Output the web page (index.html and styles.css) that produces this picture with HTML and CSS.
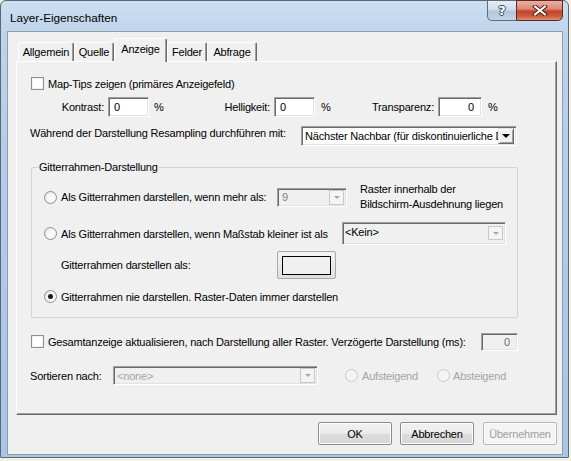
FILE: index.html
```html
<!DOCTYPE html>
<html lang="de">
<head>
<meta charset="utf-8">
<title>Layer-Eigenschaften</title>
<link rel="stylesheet" href="styles.css">
</head>
<body>
<div class="window">
  <div class="titlebar">
    <span class="title">Layer-Eigenschaften</span>
    <div class="caption-btns">
      <div class="cbtn help"><span class="q">?</span></div>
      <div class="cbtn close">
        <svg width="16" height="11" viewBox="0 0 16 11">
          <path d="M3 1.5 L13 9.5 M13 1.5 L3 9.5" stroke="#4a1c14" stroke-width="4" stroke-linecap="square" fill="none"/>
          <path d="M3 1.5 L13 9.5 M13 1.5 L3 9.5" stroke="#ffffff" stroke-width="2" stroke-linecap="square" fill="none"/>
        </svg>
      </div>
    </div>
  </div>
  <div class="client">
    <div class="tabs">
      <div class="tab t1">Allgemein</div>
      <div class="tab t2">Quelle</div>
      <div class="tab active t3">Anzeige</div>
      <div class="tab t4">Felder</div>
      <div class="tab t5">Abfrage</div>
    </div>
    <div class="panel">
      <div class="row r-map">
        <span class="chk"></span>
        <span class="lbl ml4">Map-Tips zeigen (primäres Anzeigefeld)</span>
      </div>
      <div class="row r-kon">
        <span class="lbl lk">Kontrast:</span>
        <span class="edit w41">0</span>
        <span class="pct p1">%</span>
        <span class="lbl lh">Helligkeit:</span>
        <span class="edit w41">0</span>
        <span class="pct p2">%</span>
        <span class="lbl lt">Transparenz:</span>
        <span class="edit w44 right">0</span>
        <span class="pct p3">%</span>
      </div>
      <div class="row r-res">
        <span class="lbl lres">Während der Darstellung Resampling durchführen mit:</span>
        <div class="combo white wres">
          <span class="ctext">Nächster Nachbar (für diskontinuierliche Daten)</span>
          <span class="arrow classic"><span class="tri"></span></span>
        </div>
      </div>

      <div class="group">
        <div class="legend"><span>Gitterrahmen-Darstellung</span></div>
        <div class="row g-r1">
          <span class="radio"></span>
          <span class="lbl ml4 lg1">Als Gitterrahmen darstellen, wenn mehr als:</span>
          <div class="combo dis w70">
            <span class="ctext grey">9</span>
            <span class="arrow flat"><span class="tri light"></span></span>
          </div>
          <div class="note">Raster innerhalb der<br>Bildschirm-Ausdehnung liegen</div>
        </div>
        <div class="row g-r2">
          <span class="radio"></span>
          <span class="lbl ml4 lg2">Als Gitterrahmen darstellen, wenn Maßstab kleiner ist als</span>
          <div class="combo dis w164 tall">
            <span class="ctext top">&lt;Kein&gt;</span>
            <span class="arrow flat"><span class="tri light"></span></span>
          </div>
        </div>
        <div class="row g-r3">
          <span class="lbl lg3">Gitterrahmen darstellen als:</span>
          <div class="colorbtn"><span class="swatch"></span></div>
        </div>
        <div class="row g-r4">
          <span class="radio on"></span>
          <span class="lbl ml4">Gitterrahmen nie darstellen. Raster-Daten immer darstellen</span>
        </div>
      </div>

      <div class="row r-ges">
        <span class="chk"></span>
        <span class="lbl ml4 lges">Gesamtanzeige aktualisieren, nach Darstellung aller Raster. Verzögerte Darstellung (ms):</span>
        <span class="edit dis w37 right">0</span>
      </div>
      <div class="row r-sort">
        <span class="lbl lsort">Sortieren nach:</span>
        <div class="combo dis w205">
          <span class="ctext grey2">&lt;none&gt;</span>
          <span class="arrow flat"><span class="tri light"></span></span>
        </div>
        <span class="radio dis ml27"></span>
        <span class="lbl grey2 ml4 lauf">Aufsteigend</span>
        <span class="radio dis"></span>
        <span class="lbl grey2 ml3">Absteigend</span>
      </div>
    </div>
    <div class="buttons">
      <div class="btn def">OK</div>
      <div class="btn b2">Abbrechen</div>
      <div class="btn b3 disabled">Übernehmen</div>
    </div>
  </div>
</div>
</body>
</html>
```
FILE: styles.css
```css
* { box-sizing: border-box; }
html, body { margin: 0; padding: 0; }
body {
  width: 571px;
  height: 461px;
  background: #f4f1df;
  font-family: "Liberation Sans", Arial, sans-serif;
  font-size: 11px;
  letter-spacing: -0.2px;
  color: #000;
  overflow: hidden;
}
.window {
  width: 569px;
  height: 458px;
  border: 1px solid #56687a;
  border-radius: 6px 6px 1px 1px;
  background: linear-gradient(180deg, #cddff1 0%, #bcd3eb 8%, #b3cce7 40%, #a9c5e4 100%);
  padding: 0 5px 2px 6px;
  display: flex;
  flex-direction: column;
}
.titlebar {
  height: 30px;
  display: flex;
  align-items: flex-start;
  flex-shrink: 0;
}
.title {
  font-size: 11.7px;
  letter-spacing: 0;
  margin: 10px 0 0 3px;
  flex: 1;
  color: #000;
}
.caption-btns {
  display: flex;
  margin-top: -1px;
}
.cbtn {
  height: 21px;
  border: 1px solid #5b6b7c;
  display: flex;
  align-items: center;
  justify-content: center;
}
.help {
  width: 29px;
  border-radius: 0 0 0 5px;
  border-right: none;
  background: linear-gradient(180deg, #e6eef7 0%, #cfdceb 45%, #b4c6da 55%, #c3d4e6 100%);
}
.help .q {
  color: #fff;
  font-family: "DejaVu Sans", sans-serif;
  font-weight: bold;
  font-size: 13px;
  text-shadow: 1px 0 #35485c, -1px 0 #35485c, 0 1px #35485c, 0 -1px #35485c;
}
.close {
  width: 47px;
  border-radius: 0 0 5px 0;
  border-color: #5c2a22;
  background: linear-gradient(180deg, #eab0a3 0%, #dd8a76 40%, #c7422c 55%, #cf5a40 80%, #e0906f 100%);
}
.client {
  width: 556px;
  height: 424px;
  border: 1px solid #8e9cab;
  background: #f0f0f0;
  display: flex;
  flex-direction: column;
}
.tabs {
  display: flex;
  align-items: flex-end;
  height: 23px;
  margin: 6px 0 0 10px;
}
.tab {
  height: 19px;
  border-top: 1px solid #fff;
  border-left: 1px solid #fff;
  border-right: 1px solid #696969;
  border-radius: 2px 2px 0 0;
  box-shadow: inset -1px 0 #a0a0a0;
  text-align: center;
  padding-top: 3px;
  background: #f0f0f0;
}
.tab.active {
  height: 24px;
  margin-bottom: -1px;
  position: relative;
  z-index: 1;
  padding-top: 4px;
}
.t1 { width: 56px; }
.t2 { width: 40px; }
.t3 { width: 53px; }
.t4 { width: 40px; }
.t5 { width: 50px; }
.panel {
  margin-left: 8px;
  width: 541px;
  height: 354px;
  border-top: 1px solid #fff;
  border-left: 1px solid #fff;
  border-right: 1px solid #696969;
  border-bottom: 1px solid #696969;
  box-shadow: inset -1px -1px #a0a0a0;
  flex-shrink: 0;
}
.row {
  display: flex;
  align-items: center;
}
.lbl { white-space: nowrap; }
.ml4 { margin-left: 4px; }
.ml3 { margin-left: 3px; }
.ml27 { margin-left: 27px; }

.chk {
  width: 13px;
  height: 13px;
  border: 1px solid #8e8f8f;
  background: #fff;
  box-shadow: inset 0 0 0 1px #f1f1f1;
  flex-shrink: 0;
}
.radio {
  width: 13px;
  height: 13px;
  border-radius: 50%;
  border: 1px solid #8e8f8f;
  background: radial-gradient(circle at 60% 60%, #fff 0%, #f4f4f4 50%, #d9d9d9 100%);
  flex-shrink: 0;
  display: flex;
  align-items: center;
  justify-content: center;
}
.radio.on::after {
  content: "";
  width: 5px;
  height: 5px;
  border-radius: 50%;
  background: #1b1b1b;
}
.radio.dis {
  border-color: #c8c8c8;
  background: #f4f4f4;
}

.edit {
  height: 20px;
  border: 1px solid;
  border-color: #a0a0a0 #fff #fff #a0a0a0;
  box-shadow: inset 1px 1px #696969, inset -1px -1px #e3e3e3;
  background: #fff;
  padding: 0 4px 0 5px;
  display: flex;
  align-items: center;
  flex-shrink: 0;
}
.edit.right { justify-content: flex-end; padding-right: 7px; }
.edit.dis { background: #f0f0f0; color: #6d6d6d; height: 18px; }
.w41 { width: 41px; }
.w44 { width: 44px; }
.w37 { width: 37px; }

.r-map { margin: 15px 0 0 14px; height: 13px; }
.r-kon { margin-top: 7px; height: 20px; }
.lk { width: 87px; text-align: right; margin-right: 4px; }
.pct { padding-left: 5px; }
.p1 { width: 73px; }
.lh { width: 48px; text-align: right; margin-right: 4px; }
.p2 { width: 54px; padding-left: 6px; }
.lt { width: 65px; text-align: right; margin-right: 4px; }
.p3 { padding-left: 6px; }

.r-res { margin-top: 9px; height: 20px; padding-left: 13px; align-items: flex-start; }
.lres { width: 271px; padding-top: 1px; }

.combo {
  position: relative;
  height: 20px;
  border: 1px solid;
  border-color: #a0a0a0 #fff #fff #a0a0a0;
  box-shadow: inset 1px 1px #696969, inset -1px -1px #e3e3e3;
  display: flex;
  align-items: center;
  flex-shrink: 0;
  overflow: hidden;
}
.combo.white { background: #fff; }
.combo.dis { background: #f0f0f0; }
.wres { width: 216px; }
.w70 { width: 70px; height: 19px; }
.w164 { width: 164px; }
.w205 { width: 205px; height: 19px; }
.combo.tall { height: 23px; align-items: flex-start; }
.ctext {
  flex: 1;
  white-space: nowrap;
  overflow: hidden;
  padding-left: 3px;
  min-width: 0;
}
.ctext.top { padding-top: 3px; padding-left: 2px; }
.grey { color: #808080; padding-left: 4px; }
.grey2 { color: #a3a3a3; }
.arrow {
  width: 15px;
  height: 15px;
  margin-right: 2px;
  flex-shrink: 0;
  display: flex;
  align-items: center;
  justify-content: center;
}
.combo.tall .arrow { margin-top: 3px; height: 14px; }
.arrow.classic {
  width: 16px;
  height: 16px;
  background: #f0f0f0;
  border: 1px solid;
  border-color: #e3e3e3 #696969 #696969 #e3e3e3;
  box-shadow: inset 1px 1px #fff, inset -1px -1px #a0a0a0;
}
.arrow.flat {
  background: #f4f4f4;
  border: 1px solid #c9c9c9;
}
.tri {
  width: 0;
  height: 0;
  border-left: 4px solid transparent;
  border-right: 4px solid transparent;
  border-top: 4px solid #000;
}
.tri.light { border-top-color: #a8a8a8; border-left-width: 3px; border-right-width: 3px; border-top-width: 3px; }

.group {
  margin: 21px 0 0 14px;
  width: 487px;
  height: 151px;
  border: 1px solid #d3d3d3;
  border-radius: 2px;
  padding-left: 12px;
}
.legend {
  height: 14px;
  margin: -8px 0 0 -6px;
  display: flex;
}
.legend span {
  background: #f0f0f0;
  padding: 0 1px;
  line-height: 14px;
}
.g-r1 { margin-top: 13px; height: 20px; }
.lg1 { width: 216px; }
.note { margin-left: 13px; line-height: 15px; }
.g-r2 { margin-top: 15px; height: 23px; }
.lg2 { width: 281px; }
.g-r3 { margin-top: 6px; height: 28px; padding-left: 17px; }
.lg3 { width: 216px; }
.colorbtn {
  width: 59px;
  height: 28px;
  border: 1px solid #a9a9a9;
  border-radius: 2px;
  background: linear-gradient(180deg, #f3f3f3 0%, #ebebeb 50%, #dedede 100%);
  display: flex;
  align-items: center;
  justify-content: center;
}
.swatch {
  width: 49px;
  height: 19px;
  border: 1px solid #000;
  background: #f0f0f0;
}
.g-r4 { margin-top: 11px; height: 13px; }

.r-ges { margin-top: 15px; height: 17px; padding-left: 14px; }
.lges { width: 433px; }
.r-sort { margin-top: 16px; height: 19px; padding-left: 13px; }
.lsort { width: 83px; }
.lauf { width: 75px; }

.buttons {
  display: flex;
  justify-content: flex-end;
  margin-top: 7px;
  padding-right: 5px;
}
.btn {
  width: 74px;
  height: 23px;
  border: 1px solid #8b8b8b;
  border-radius: 2px;
  background: linear-gradient(180deg, #f2f2f2 0%, #ebebeb 50%, #dddddd 51%, #d6d6d6 100%);
  box-shadow: inset 0 0 0 1px #fbfbfb;
  display: flex;
  align-items: center;
  justify-content: center;
}
.b2 { margin-left: 8px; }
.b3 { margin-left: 9px; }
.btn.disabled {
  color: #a0a0a0;
  border-color: #b7b7b7;
  background: #f4f4f4;
}
```
